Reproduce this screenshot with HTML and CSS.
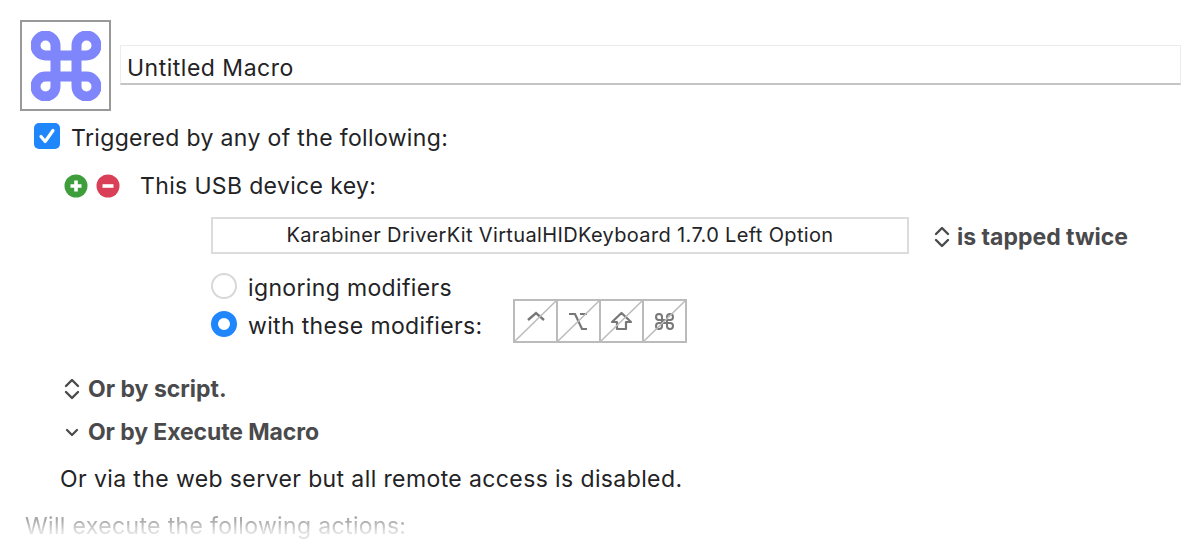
FILE: index.html
```html
<!DOCTYPE html>
<html lang="en">
<head>
    <meta charset="UTF-8">
    <title>Untitled Macro</title>
    <link rel="stylesheet" href="styles.css">
</head>
<body>

    <!-- Macro name and icon -->
    <div class="header">
        <div class="macro-icon">
            <svg width="70" height="70" viewBox="0 0 70 70">
                <path d="M24.5 14.5V55.5A10 10 0 1 1 14.5 45.5H55.5A10 10 0 1 1 45.5 55.5V14.5A10 10 0 1 1 55.5 24.5H14.5A10 10 0 1 1 24.5 14.5Z" fill="none" stroke="#7f85fa" stroke-width="10"/>
            </svg>
        </div>
        <div class="macro-name">Untitled Macro</div>
    </div>

    <!-- Triggers -->
    <div class="trigger-head">
        <span class="checkbox">
            <svg width="26" height="26" viewBox="0 0 26 26">
                <path d="M7 13.5L11.2 18.5L19 7.5" fill="none" stroke="#fff" stroke-width="3.2" stroke-linecap="round" stroke-linejoin="round"/>
            </svg>
        </span>
        <span class="txt">Triggered by any of the following:</span>
    </div>

    <div class="usb-row">
        <svg class="round-btn" width="24" height="24" viewBox="0 0 24 24">
            <circle cx="12" cy="12" r="11.5" fill="#3f9e3c"/>
            <path d="M12 6.5V17.5M6.5 12H17.5" stroke="#fff" stroke-width="3.6"/>
        </svg>
        <svg class="round-btn" width="24" height="24" viewBox="0 0 24 24">
            <circle cx="12" cy="12" r="11.5" fill="#d93f56"/>
            <path d="M6.5 12H17.5" stroke="#fff" stroke-width="3.6"/>
        </svg>
        <span class="usb-label">This USB device key:</span>
    </div>

    <div class="device-row">
        <div class="device-field">Karabiner DriverKit VirtualHIDKeyboard 1.7.0 Left Option</div>
        <div class="popup">
            <svg class="updown" width="16" height="24" viewBox="0 0 16 24">
                <path d="M2 9L8 3L14 9M2 15L8 21L14 15" fill="none" stroke="#4a4a4c" stroke-width="2.4" stroke-linecap="round" stroke-linejoin="round"/>
            </svg>
            <span>is tapped twice</span>
        </div>
    </div>

    <div class="radio-row first">
        <span class="radio"></span>
        <span class="txt">ignoring modifiers</span>
    </div>
    <div class="radio-row">
        <span class="radio on"></span>
        <span class="txt mod-label">with these modifiers:</span>
        <div class="modifiers">
            <span class="mod">
                <svg width="41" height="40" viewBox="0 0 41 40">
                    <path d="M13 19L21 12L29 19" fill="none" stroke="#777" stroke-width="2.4"/>
                    <path d="M0 40L41 0" stroke="#bbb" stroke-width="1.5"/>
                </svg>
            </span>
            <span class="mod">
                <svg width="41" height="40" viewBox="0 0 41 40">
                    <path d="M11 13H17L24 28H29M22 13H29" fill="none" stroke="#777" stroke-width="2.2"/>
                    <path d="M0 40L41 0" stroke="#bbb" stroke-width="1.5"/>
                </svg>
            </span>
            <span class="mod">
                <svg width="41" height="40" viewBox="0 0 41 40">
                    <path d="M20.5 12L30 21H25V28H16V21H11Z" fill="none" stroke="#777" stroke-width="2.2" stroke-linejoin="round"/>
                    <path d="M0 40L41 0" stroke="#bbb" stroke-width="1.5"/>
                </svg>
            </span>
            <span class="mod">
                <svg width="41" height="40" viewBox="0 0 41 40">
                    <path d="M18 16V25A3 3 0 1 1 15 22H26A3 3 0 1 1 23 25V16A3 3 0 1 1 26 19H15A3 3 0 1 1 18 16Z" fill="none" stroke="#777" stroke-width="2"/>
                    <path d="M0 40L41 0" stroke="#bbb" stroke-width="1.5"/>
                </svg>
            </span>
        </div>
    </div>

    <!-- Other trigger sections -->
    <div class="section script">
        <svg class="updown" width="16" height="24" viewBox="0 0 16 24">
            <path d="M2 9L8 3L14 9M2 15L8 21L14 15" fill="none" stroke="#4a4a4c" stroke-width="2.4" stroke-linecap="round" stroke-linejoin="round"/>
        </svg>
        <span>Or by script.</span>
    </div>
    <div class="section execute">
        <svg class="updown" width="16" height="24" viewBox="0 0 16 24">
            <path d="M3 10L8 15L13 10" fill="none" stroke="#4a4a4c" stroke-width="2.2" stroke-linecap="round" stroke-linejoin="round"/>
        </svg>
        <span>Or by Execute Macro</span>
    </div>
    <p class="web-server">Or via the web server but all remote access is disabled.</p>

    <p class="actions">Will execute the following actions:</p>

</body>
</html>
```
FILE: styles.css
```css
/* General */
html, body {
    height: 552px;
    overflow: hidden;
}

body {
    margin: 0;
    background: #fff;
    color: #232326;
    font-family: 'Inter', 'Liberation Sans', sans-serif;
    font-size: 23px;
    line-height: 30px;
    letter-spacing: 0.35px;
}

p {
    margin: 0;
}

.txt {
    padding-top: 2px;
}

/* Header */
.header {
    display: flex;
    padding: 20px 19px 0 20px;
}

.macro-icon {
    box-sizing: border-box;
    width: 91px;
    height: 91px;
    border: 2px solid #999;
    padding: 9px;
    flex-shrink: 0;
}

.macro-icon svg {
    display: block;
}

.macro-name {
    flex: 1;
    box-sizing: border-box;
    height: 40px;
    margin: 25px 0 0 9px;
    padding: 7px 6px 0;
    border: 1px solid #ececec;
    border-bottom: 2px solid #c4c4c4;
    line-height: 30px;
    letter-spacing: 0.5px;
}

/* Trigger heading */
.trigger-head {
    display: flex;
    align-items: center;
    height: 30px;
    margin: 11px 0 0 34px;
}

.checkbox {
    width: 26px;
    height: 26px;
    border-radius: 5px;
    background: #1f86fb;
    margin: 0 11px 2px 0;
}

.checkbox svg {
    display: block;
}

/* USB row */
.usb-row {
    display: flex;
    align-items: center;
    height: 30px;
    margin: 19px 0 0 64px;
}

.round-btn {
    margin-right: 8px;
}

.usb-label {
    margin-left: 12px;
}

/* Device key row */
.device-row {
    display: flex;
    align-items: center;
    margin: 16px 0 0 211px;
}

.device-field {
    box-sizing: border-box;
    width: 698px;
    height: 37px;
    border: 2px solid #dcdcdc;
    font-size: 20px;
    line-height: 33px;
    text-align: center;
}

.popup {
    display: flex;
    align-items: center;
    margin: 2px 0 0 25px;
    font-weight: 700;
    color: #4a4a4c;
    letter-spacing: 0;
}

.updown {
    margin-right: 7px;
    flex-shrink: 0;
}

/* Radios */
.radio-row {
    display: flex;
    align-items: center;
    height: 38px;
    margin-left: 211px;
}

.radio-row.first {
    margin-top: 14px;
}

.radio {
    box-sizing: border-box;
    width: 26px;
    height: 26px;
    border: 2px solid #d8d8d8;
    border-radius: 50%;
    margin: 0 11px 2px 0;
}

.radio.on {
    border: 7px solid #1f86fb;
}

.mod-label {
    margin-right: 31px;
}

/* Modifier toggles */
.modifiers {
    display: flex;
    border: 2px solid #bbb;
    margin-bottom: 8px;
}

.mod {
    width: 41px;
    height: 40px;
    border-left: 2px solid #bbb;
}

.mod:first-child {
    border-left: none;
}

.mod svg {
    display: block;
}

/* Sections */
.section {
    display: flex;
    align-items: center;
    height: 30px;
    margin-left: 64px;
    font-weight: 700;
    color: #4a4a4c;
    letter-spacing: 0;
}

.section.script {
    margin-top: 30px;
}

.section.execute {
    margin-top: 13px;
    letter-spacing: -0.1px;
}

.section .updown {
    margin-right: 8px;
}

.web-server {
    margin: 17px 0 0 60px;
    letter-spacing: 0.39px;
}

.actions {
    margin: 17px 0 0 25px;
    color: #a8a8a8;
    -webkit-mask-image: linear-gradient(to bottom, #000 30%, rgba(0, 0, 0, 0.35) 70%);
    mask-image: linear-gradient(to bottom, #000 30%, rgba(0, 0, 0, 0.35) 70%);
}
```
